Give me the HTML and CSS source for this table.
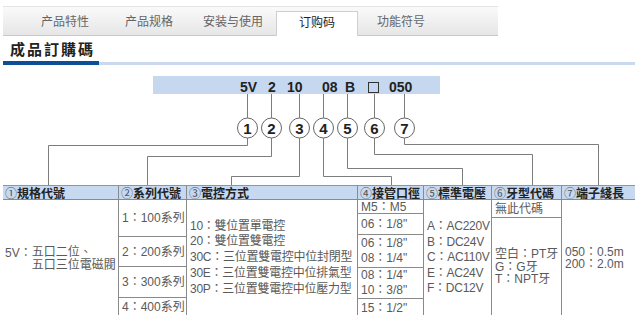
FILE: index.html
```html
<!DOCTYPE html>
<html lang="zh-Hant">
<head>
<meta charset="utf-8">
<title>成品訂購碼</title>
<link rel="stylesheet" href="styles.css">
</head>
<body>
<div class="tabs">
  <div class="tab">产品特性</div>
  <div class="tab">产品规格</div>
  <div class="tab">安装与使用</div>
  <div class="tab active">订购码</div>
  <div class="tab">功能符号</div>
</div>
<h2 class="title">成品訂購碼</h2>
<div class="rule"><span class="rule-dark"></span><span class="rule-light"></span></div>

<svg class="diagram" width="635" height="120" viewBox="0 65 635 120">
  <rect class="code-bar" x="153" y="76" width="287" height="18"/>
  <text class="code" x="240" y="92">5V</text>
  <text class="code" x="268" y="92">2</text>
  <text class="code" x="287" y="92">10</text>
  <text class="code" x="322" y="92">08</text>
  <text class="code" x="345" y="92">B</text>
  <rect class="code-box" x="368.5" y="82.5" width="10" height="10"/>
  <text class="code" x="389" y="92">050</text>

  <polyline class="wire" points="247.5,94 247.5,118"/>
  <polyline class="wire" points="271.5,94 271.5,118"/>
  <polyline class="wire" points="299.5,94 299.5,118"/>
  <polyline class="wire" points="323.5,94 323.5,118"/>
  <polyline class="wire" points="347.5,94 347.5,118"/>
  <polyline class="wire" points="374.5,94 374.5,118"/>
  <polyline class="wire" points="404.5,94 404.5,118"/>

  <polyline class="wire" points="247.5,138 247.5,145.5 48.5,145.5 48.5,185"/>
  <polyline class="wire" points="271.5,138 271.5,156.5 147.5,156.5 147.5,185"/>
  <polyline class="wire" points="299.5,138 299.5,176.5 231.5,176.5 231.5,185"/>
  <polyline class="wire" points="323.5,138 323.5,176.5 391.5,176.5 391.5,185"/>
  <polyline class="wire" points="347.5,138 347.5,168.5 462.5,168.5 462.5,185"/>
  <polyline class="wire" points="374.5,138 374.5,154.5 532.5,154.5 532.5,185"/>
  <polyline class="wire" points="404.5,138 404.5,144.5 598.5,144.5 598.5,185"/>

  <circle class="bubble" cx="247.5" cy="128" r="10"/>
  <circle class="bubble" cx="271.5" cy="128" r="10"/>
  <circle class="bubble" cx="299.5" cy="128" r="10"/>
  <circle class="bubble" cx="323.5" cy="128" r="10"/>
  <circle class="bubble" cx="347.5" cy="128" r="10"/>
  <circle class="bubble" cx="374.5" cy="128" r="10"/>
  <circle class="bubble" cx="404.5" cy="128" r="10"/>
  <text class="num" x="247.5" y="133.5">1</text>
  <text class="num" x="271.5" y="133.5">2</text>
  <text class="num" x="299.5" y="133.5">3</text>
  <text class="num" x="323.5" y="133.5">4</text>
  <text class="num" x="347.5" y="133.5">5</text>
  <text class="num" x="374.5" y="133.5">6</text>
  <text class="num" x="404.5" y="133.5">7</text>
</svg>

<div class="table">
  <div class="thead">
    <div class="th"><span class="ci">①</span>規格代號</div>
    <div class="th"><span class="ci">②</span>系列代號</div>
    <div class="th"><span class="ci">③</span>電控方式</div>
    <div class="th"><span class="ci">④</span>接管口徑</div>
    <div class="th"><span class="ci">⑤</span>標準電壓</div>
    <div class="th"><span class="ci">⑥</span>牙型代碼</div>
    <div class="th"><span class="ci">⑦</span>端子綫長</div>
  </div>
  <div class="tbody">
    <div class="col col1">
      <div class="cell grow">
        <span class="lead">5V：</span>
        <span class="lines lh14">五口二位、<br>五口三位電磁閥</span>
      </div>
    </div>
    <div class="col">
      <div class="cell h37">1：100系列</div>
      <div class="cell h30">2：200系列</div>
      <div class="cell h31">3：300系列</div>
      <div class="cell grow last">4：400系列</div>
    </div>
    <div class="col">
      <div class="cell grow last tight">
        <span class="lines lh16">10：雙位置單電控<br>20：雙位置雙電控<br>30C：三位置雙電控中位封閉型<br>30E：三位置雙電控中位排氣型<br>30P：三位置雙電控中位壓力型</span>
      </div>
    </div>
    <div class="col">
      <div class="cell h14">M5：M5</div>
      <div class="cell h21">06：1/8"</div>
      <div class="cell h33"><span class="lines lh15">06：1/8"<br>08：1/4"</span></div>
      <div class="cell h31"><span class="lines lh15">08：1/4"<br>10：3/8"</span></div>
      <div class="cell grow last">15：1/2"</div>
    </div>
    <div class="col">
      <div class="cell grow last tight">
        <span class="lines lh155">A：AC220V<br>B：DC24V<br>C：AC110V<br>E：AC24V<br>F：DC12V</span>
      </div>
    </div>
    <div class="col">
      <div class="cell h18">無此代碼</div>
      <div class="cell grow last"><span class="lines lh12">空白：PT牙<br>G：G牙<br>T：NPT牙</span></div>
    </div>
    <div class="col">
      <div class="cell grow last"><span class="lines lh12">050：0.5m<br>200：2.0m</span></div>
    </div>
  </div>
</div>
</body>
</html>
```

FILE: styles.css
```css
* { box-sizing: border-box; }

html, body {
  margin: 0;
  padding: 0;
  background: #fff;
}

body {
  width: 635px;
  height: 315px;
  overflow: hidden;
  font-family: "Liberation Sans", "Noto Sans CJK TC", sans-serif;
  color: #333;
}

/* ---------- tabs ---------- */
.tabs {
  display: flex;
  align-items: flex-end;
  margin: 6px 0 0 3px;
  width: 495px;
  height: 30px;
  padding-left: 21px;
  border-top: 1px solid #e3e3e3;
  border-bottom: 1px solid #c9c9c9;
  background: linear-gradient(#fafafa, #e6e6e6);
}

.tab {
  width: 82px;
  height: 28px;
  margin-right: 2px;
  line-height: 28px;
  text-align: center;
  font-family: "Noto Sans CJK SC", sans-serif;
  font-size: 12px;
  color: #666;
}

.tab.active {
  height: 25px;
  margin-bottom: -1px;
  line-height: 19px;
  background: #fff;
  border: 1px solid #cfcfcf;
  border-bottom: none;
  color: #222;
}

/* ---------- title ---------- */
.title {
  margin: 0;
  height: 25px;
  padding-left: 10px;
  line-height: 25px;
  font-family: "Noto Sans CJK TC", sans-serif;
  font-size: 15px;
  font-weight: bold;
  letter-spacing: 2px;
  color: #222;
}

.rule {
  display: flex;
  height: 4px;
  margin-left: 3px;
}

.rule-dark {
  width: 96px;
  background: #0d4f94;
}

.rule-light {
  flex: 1;
  margin-top: 1px;
  background: #cbd9ee;
}

/* ---------- diagram ---------- */
.diagram {
  display: block;
}

.code-bar { fill: #c5d8ef; }

.code {
  font-family: "Liberation Sans", sans-serif;
  font-weight: bold;
  font-size: 14px;
  fill: #222;
}

.code-box {
  fill: none;
  stroke: #333;
  stroke-width: 1;
}

.wire {
  fill: none;
  stroke: #7d7d7d;
  stroke-width: 1;
}

.bubble {
  fill: #fff;
  stroke: #666;
  stroke-width: 1;
}

.num {
  font-family: "Liberation Sans", sans-serif;
  font-weight: bold;
  font-size: 15px;
  fill: #222;
  text-anchor: middle;
}

/* ---------- table ---------- */
.table {
  margin-left: 3px;
  font-size: 12px;
}

.thead,
.tbody {
  display: grid;
  grid-template-columns: 115px 68px 171px 66px 68px 70px 1fr;
}

.thead {
  height: 15px;
  background: #c6d9f1;
  border-top: 1px solid #8797ab;
  border-bottom: 1px solid #8a8a8a;
}

.th {
  padding-left: 2px;
  line-height: 13px;
  font-family: "Noto Sans CJK TC", sans-serif;
  font-weight: bold;
  color: #222;
  white-space: nowrap;
  border-left: 1px solid #8a8a8a;
}

.th:first-child { border-left: none; }

.ci {
  font-weight: normal;
  color: #555;
}

.tbody {
  height: 116px;
  color: #5a5a5a;
}

.col {
  display: flex;
  flex-direction: column;
  border-left: 1px solid #8a8a8a;
}

.col1 { border-left: none; }

.cell {
  display: flex;
  align-items: center;
  padding-left: 3px;
  white-space: nowrap;
  border-bottom: 1px solid #8a8a8a;
  line-height: 14px;
}

.cell.last { border-bottom: none; }

.cell.tight { letter-spacing: -0.25px; }

.col1 .cell {
  border-bottom: none;
  padding-left: 2px;
  padding-top: 2px;
  align-items: center;
}

.lead { align-self: center; margin-top: -13px; }

.grow { flex: 1; }
.h14 { height: 14px; }
.h18 { height: 18px; }
.h21 { height: 21px; }
.h30 { height: 30px; }
.h31 { height: 31px; }
.h33 { height: 33px; }
.h37 { height: 37px; }

.lines { display: block; }
.lh12 { line-height: 12.5px; }
.lh14 { line-height: 13.5px; }
.lh15 { line-height: 15px; }
.lh155 { line-height: 15.5px; }
.lh16 { line-height: 15.8px; }
```
